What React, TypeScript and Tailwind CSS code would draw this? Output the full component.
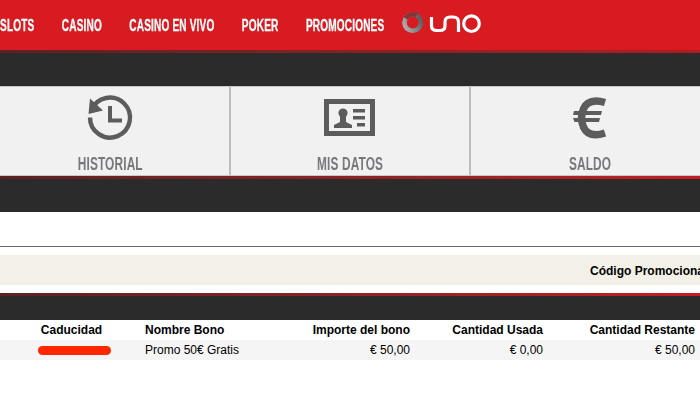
const DIN = "font-['Liberation_Sans',sans-serif] font-bold";

function HistoryIcon() {
  return (
    <svg width="50" height="50" viewBox="0 0 50 50" fill="none">
      <path d="M6.5 17 A20 20 0 1 1 5 24.5" stroke="#5c5c5c" strokeWidth="4.4" />
      <path d="M5 5.5 L3.5 21 L18 17.5 Z" fill="#5c5c5c" />
      <path d="M25 13 V27.5 H37" stroke="#5c5c5c" strokeWidth="4" />
    </svg>
  );
}

function CardIcon() {
  return (
    <svg width="52" height="38" viewBox="0 0 52 38" fill="none">
      <rect x="2.5" y="2.5" width="46" height="32" stroke="#5c5c5c" strokeWidth="5" />
      <circle cx="19" cy="14" r="4.6" fill="#5c5c5c" />
      <path d="M10 29 V26 L16 23 V17 H22 V23 L28 26 V29 Z" fill="#5c5c5c" />
      <path d="M29 10 H41 V13.5 H29 Z M29 17 H41 V20.5 H29 Z M33 24 H41 V27.5 H33 Z" fill="#5c5c5c" />
    </svg>
  );
}

function EuroIcon() {
  return (
    <svg width="34" height="42" viewBox="0 0 34 42" fill="none" className="-ml-[2px]">
      <path d="M32 5.5 Q10 -1 8.5 21 Q10 43 32 36" stroke="#5c5c5c" strokeWidth="7.5" />
      <path d="M1 14 H29 L28 18 H0 Z M0 21 H27 L26 25 H1.5 Z" fill="#5c5c5c" />
    </svg>
  );
}

function UnoLogo() {
  return (
    <svg width="82" height="26" viewBox="401 9 82 26" fill="none" className="blur-[0.4px]">
      <defs>
        <linearGradient id="ring" x1="1" y1="0.4" x2="0" y2="0.9">
          <stop offset="0" stopColor="#5f5f62" />
          <stop offset="1" stopColor="#b5b0b0" />
        </linearGradient>
      </defs>
      <circle cx="412.7" cy="22.5" r="8.2" stroke="url(#ring)" strokeWidth="4.6" />
      <path d="M405.6 18.4 A8.2 8.2 0 0 1 416.5 15.2" stroke="#8a3335" strokeWidth="4.6" />
      <path
        d="M431.5 17 V26 Q431.5 30.5 437 30.5 H440 Q445 30.5 445 26 V22 Q445 17 450 17 H453 Q458.5 17 458.5 22 V32"
        stroke="#fff"
        strokeWidth="3.2"
      />
      <circle cx="471.5" cy="23.7" r="7.8" stroke="#fff" strokeWidth="3.2" />
    </svg>
  );
}

const tiles = [
  { label: "HISTORIAL", icon: <HistoryIcon />, border: "border-r-[2px]", shift: "" },
  { label: "MIS DATOS", icon: <CardIcon />, border: "border-r-[2px]", shift: "" },
  { label: "SALDO", icon: <EuroIcon />, border: "", shift: "-ml-[3px]" },
];

const cols = "grid grid-cols-[143px_125px_142px_133px_152px] items-center text-[12px] text-black";

export default function App() {
  return (
    <div className="w-[700px] h-[400px] overflow-hidden bg-white font-['Liberation_Sans',Arial,sans-serif]">
      <header className="h-[50px] bg-[#d81a21] flex items-center text-white">
        <div className="w-[402px] shrink-0 pt-[1px]">
          <nav className={`flex w-max gap-[43.5px] items-center origin-left scale-x-[0.63] text-[16px] tracking-[0.25px] [-webkit-text-stroke:0.3px_#ffffff] ${DIN}`}>
            <span>SLOTS</span>
            <span>CASINO</span>
            <span>CASINO EN VIVO</span>
            <span>POKER</span>
            <span>PROMOCIONES</span>
          </nav>
        </div>
        <div className="-ml-px mb-[6px]"><UnoLogo /></div>
      </header>
      <div className="h-[3px] bg-gradient-to-r from-[#5c2124] to-[#b01c22]" />
      <div className="h-[33px] bg-[#2b2b2b]" />
      <div className="h-[90px] bg-[#f1f1f1] border-y border-[#c8c8c8] flex -ml-[9px]">
        {tiles.map((t) => (
          <div key={t.label} className={`w-[240px] shrink-0 h-full flex flex-col items-center border-[#bdbdbd] ${t.border}`}>
            <div className="h-[60px] pt-[2px] flex items-center justify-center">{t.icon}</div>
            <span className={`text-[18px] leading-[20px] mt-[7px] text-[#77787b] scale-x-[0.66] tracking-[0.2px] whitespace-nowrap ${t.shift} ${DIN}`}>{t.label}</span>
          </div>
        ))}
      </div>
      <div className="h-[3px] bg-gradient-to-r from-[#5c2124] to-[#c41c22]" />
      <div className="h-[33px] bg-[#2b2b2b]" />
      <div className="h-[34px]" />
      <div className="h-px bg-[#666666]" />
      <div className="h-[8px]" />
      <div className="h-[30px] bg-[#f3f0e7] flex items-center pl-[590px] pt-[2px] overflow-hidden text-[12px] font-bold text-black whitespace-nowrap">
        Código Promocional
      </div>
      <div className="h-[8px]" />
      <div className="h-[3px] bg-gradient-to-r from-[#5c2124] to-[#c41c22]" />
      <div className="h-[24px] bg-[#2b2b2b]" />
      <div className={`h-[20px] font-bold ${cols}`}>
        <span className="text-center">Caducidad</span>
        <span className="pl-[2px]">Nombre Bono</span>
        <span className="text-right">Importe del bono</span>
        <span className="text-right">Cantidad Usada</span>
        <span className="text-right">Cantidad Restante</span>
      </div>
      <div className={`h-[20px] bg-[#f5f5f5] ${cols}`}>
        <span className="flex justify-center pl-[6px]"><span className="block w-[73px] h-[9px] rounded-full bg-[#ff2600]" /></span>
        <span className="pl-[2px]">Promo 50€ Gratis</span>
        <span className="text-right">€ 50,00</span>
        <span className="text-right">€ 0,00</span>
        <span className="text-right">€ 50,00</span>
      </div>
    </div>
  );
}
